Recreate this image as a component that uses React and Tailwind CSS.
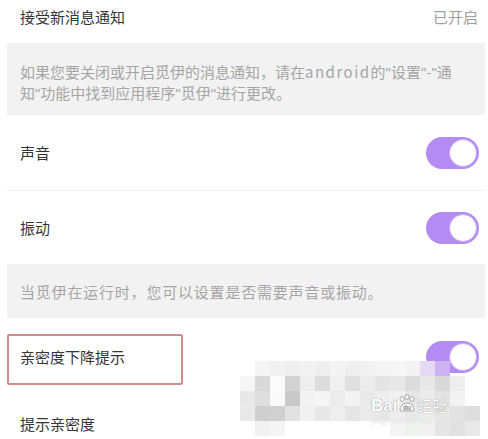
const Toggle = () => (
  <div className="relative w-[53px] h-[32px] rounded-full bg-[#b48af3]">
    <div className="absolute right-[2px] top-[2px] w-[28px] h-[28px] rounded-full bg-white border border-[#c9b0f5]" />
  </div>
);

// narrow straight quote like the phone font draws it
const Q = () => <span className="font-['Liberation_Sans',sans-serif]">"</span>;

const mosaic = [
  ["", "bg-[#f4f4f4]", "bg-[#f1f1f1]", "bg-[#efefef]", "bg-[#f2f2f2]", "bg-[#eeeeee]", "bg-[#f3f3f3]", "bg-[#efefef]", "bg-[#f1f1f1]", "bg-[#f4f4f4]", "bg-[#f6f6f6]", "bg-[#f3f3f3]", "bg-[#e4daf5]", "bg-[#cdb3f2]", "", ""],
  ["bg-[#f6f6f6]", "bg-[#d9d9d9]", "bg-[#fbfbfb]", "bg-[#d2d2d2]", "bg-[#eeeeee]", "bg-[#dcdcdc]", "bg-[#f0f0f0]", "bg-[#e0e0e0]", "bg-[#ececec]", "bg-[#e4e4e4]", "bg-[#e7e7e7]", "bg-[#dcdcdc]", "bg-[#e8e8e8]", "bg-[#d9d9d9]", "bg-[#eeeeee]", ""],
  ["bg-[#e8e8e8]", "bg-[#dedede]", "bg-[#fafafa]", "bg-[#c9c9c9]", "bg-[#f2f2f2]", "bg-[#f5f5f5]", "bg-[#ececec]", "bg-[#f3f3f3]", "bg-[#e9e9e9]", "bg-[#eeeeee]", "bg-[#f0f0f0]", "bg-[#e6e6e6]", "bg-[#ebebeb]", "bg-[#e3e3e3]", "bg-[#f2f2f2]", ""],
  ["bg-[#e9e9e9]", "bg-[#cfcfcf]", "bg-[#d0d0d0]", "bg-[#e2e2e2]", "bg-[#f1f1f1]", "bg-[#e8e8e8]", "bg-[#eeeeee]", "bg-[#e5e5e5]", "bg-[#ebebeb]", "bg-[#e7e7e7]", "bg-[#eeeeee]", "bg-[#e9e9e9]", "bg-[#ececec]", "bg-[#e6e6e6]", "bg-[#e2e2e2]", "bg-[#dedede]"],
  ["", "bg-[#f1f1f1]", "bg-[#f4f4f4]", "", "", "", "", "", "", "", "bg-[#f4f4f4]", "bg-[#eef3ef]", "bg-[#f1f1f1]", "bg-[#e6e6e6]", "bg-[#e1e1e1]", "bg-[#e9e9e9]"],
];

export default function App() {
  return (
    <div className="relative w-[488px] h-[439px] overflow-hidden bg-white font-['Noto_Sans_CJK_SC',sans-serif] text-[15px] leading-[20px]">
      <div className="flex justify-between h-[43px] pt-[7px] pl-[20px] pr-[10px]">
        <span className="text-[#363636]">接受新消息通知</span>
        <span className="text-[#9e9e9e]">已开启</span>
      </div>

      <div className="ml-[7px] mr-[3px] h-[72px] bg-[#f2f2f2] pt-[19px] pl-[13px] text-[#a5a5a5]">
        如果您要关闭或开启觅伊的消息通知，请在<span className="tracking-[1.5px]">android</span>的<Q />设置<Q />-<Q />通
        <br />
        知<Q />功能中找到应用程序<Q />觅伊<Q />进行更改。
      </div>

      <div className="flex items-center justify-between h-[75px] pl-[20px] pr-[9px]">
        <span className="text-[#363636]">声音</span>
        <Toggle />
      </div>
      <div className="ml-[7px] mr-[3px] h-px bg-[#f0f0f0]" />
      <div className="flex items-center justify-between h-[73px] pl-[20px] pr-[9px]">
        <span className="text-[#363636]">振动</span>
        <Toggle />
      </div>

      <div className="ml-[7px] mr-[3px] h-[54px] bg-[#f2f2f2] pt-[18px] pl-[13px] text-[#a5a5a5] tracking-[0.8px]">
        当觅伊在运行时，您可以设置是否需要声音或振动。
      </div>

      <div className="flex items-center justify-between h-[78px] pl-[20px] pr-[9px]">
        <span className="text-[#363636]">亲密度下降提示</span>
        <Toggle />
      </div>
      <div className="flex items-center h-[56px] pl-[20px]">
        <span className="text-[#363636]">提示亲密度</span>
      </div>

      {/* annotation box */}
      <div className="absolute left-[7px] top-[334px] w-[176px] h-[51px] border-2 border-[#cf8c8c] rounded-[2px]" />

      {/* pixelated watermark area */}
      <div className="absolute left-[240px] top-[361px] flex flex-col">
        {mosaic.map((row, r) => (
          <div key={r} className="flex">
            {row.map((c, i) => (
              <div key={i} className={`w-[15px] h-[15px] ${c}`} />
            ))}
          </div>
        ))}
      </div>
      <div className="absolute left-[371px] top-[394px] flex items-end text-white font-['Liberation_Sans',sans-serif] [text-shadow:0_0_1px_#9a9a9a,0_0_1px_#9a9a9a]">
        <span className="text-[17px] leading-[18px] font-bold">Bai</span>
        <svg width="20" height="20" viewBox="0 0 20 20" className="mb-[1px]">
          <g fill="white" stroke="#a8a8a8" strokeWidth="1">
            <ellipse cx="5" cy="5" rx="2" ry="2.5" />
            <ellipse cx="10" cy="3" rx="2" ry="2.5" />
            <ellipse cx="15" cy="5" rx="2" ry="2.5" />
            <path d="M3 17 Q3 9 10 9 Q17 9 17 17 Z" />
          </g>
          <text x="10" y="16" fontSize="7" textAnchor="middle" fill="#a8a8a8" fontFamily="Liberation Sans">du</text>
        </svg>
        <span className="text-[15px] leading-[18px] font-['Noto_Sans_CJK_SC',sans-serif]">经验</span>
      </div>
      <div className="absolute left-[372px] top-[416px] text-[8px] leading-[10px] text-white font-['Liberation_Serif',serif] [text-shadow:0_0_1px_#b5b5b5]">
        jingyan.baidu.com
      </div>
    </div>
  );
}
